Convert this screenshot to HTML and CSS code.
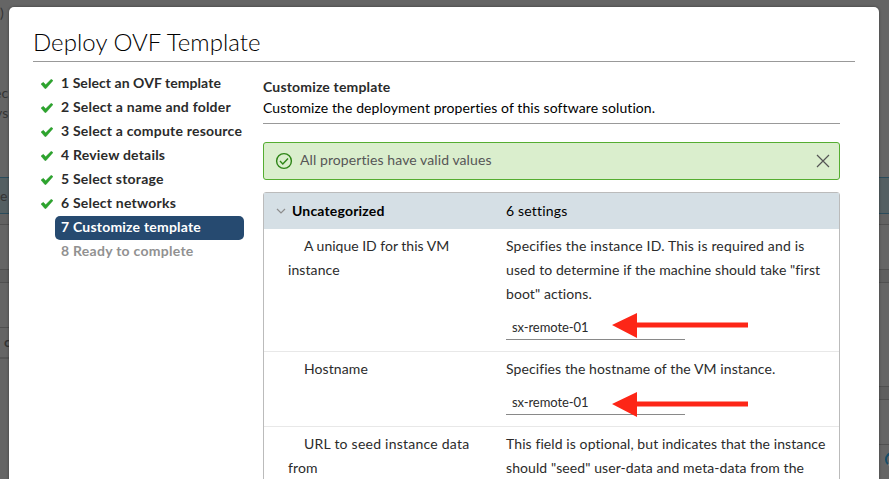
FILE: index.html
```
<!DOCTYPE html>
<html lang="en">
<head>
<meta charset="utf-8">
<title>Deploy OVF Template</title>
<link rel="stylesheet" href="styles.css">
</head>
<body>
<div class="page">
  <div class="gutter left">
    <div class="g-head"><span class="paren">)</span><span class="ec">ec</span><span class="ys">ys</span></div>
    <div class="g-teal">e</div>
    <div class="g-gap"></div>
    <div class="g-card h45"></div>
    <div class="g-gap12"></div>
    <div class="g-card h45"></div>
    <div class="g-label">c</div>
  </div>
  <main class="modal">
    <h1>Deploy OVF Template</h1>
    <div class="body">
      <ol class="steps">
        <li><svg class="tick" viewBox="0 0 12 10"><path d="M0 5 2.3 3.3 4.7 5.7 10.2.3 12 1.6 5 9.5 3.9 9.5Z"/></svg><span class="s1">1 Select an OVF template</span></li>
        <li><svg class="tick" viewBox="0 0 12 10"><path d="M0 5 2.3 3.3 4.7 5.7 10.2.3 12 1.6 5 9.5 3.9 9.5Z"/></svg><span>2 Select a name and folder</span></li>
        <li><svg class="tick" viewBox="0 0 12 10"><path d="M0 5 2.3 3.3 4.7 5.7 10.2.3 12 1.6 5 9.5 3.9 9.5Z"/></svg><span>3 Select a compute resource</span></li>
        <li><svg class="tick" viewBox="0 0 12 10"><path d="M0 5 2.3 3.3 4.7 5.7 10.2.3 12 1.6 5 9.5 3.9 9.5Z"/></svg><span>4 Review details</span></li>
        <li><svg class="tick" viewBox="0 0 12 10"><path d="M0 5 2.3 3.3 4.7 5.7 10.2.3 12 1.6 5 9.5 3.9 9.5Z"/></svg><span>5 Select storage</span></li>
        <li><svg class="tick" viewBox="0 0 12 10"><path d="M0 5 2.3 3.3 4.7 5.7 10.2.3 12 1.6 5 9.5 3.9 9.5Z"/></svg><span>6 Select networks</span></li>
        <li class="active"><span>7 Customize template</span></li>
        <li class="pending"><span>8 Ready to complete</span></li>
      </ol>
      <section class="content">
        <h2>Customize template</h2>
        <p class="lead">Customize the deployment properties of this software solution.</p>
        <div class="alert">
          <svg class="ok" viewBox="0 0 18 18"><circle cx="9" cy="9" r="7.4"/><path d="m5 9.1 2.8 2.8L13 6.4"/></svg>
          <span>All properties have valid values</span>
          <svg class="close" viewBox="0 0 14 14"><path d="m1 1 12 12M13 1 1 13"/></svg>
        </div>
        <div class="table">
          <div class="thead">
            <div class="name"><svg class="caret" viewBox="0 0 10 6"><path d="m1 1 4 4 4-4"/></svg><span>Uncategorized</span></div>
            <div>6 settings</div>
          </div>
          <div class="row first">
            <div class="prop"><span class="tight">A unique ID for this VM</span><br>instance</div>
            <div class="desc"><span class="loose">Specifies the instance ID. This is required and is</span><br>used to determine if the machine should take "first<br>boot" actions.
              <div class="field">sx-remote-01<svg class="arrow" viewBox="0 0 136 26"><path d="M0 13 25 1v9.5h111v5H25V26Z"/></svg></div>
            </div>
          </div>
          <div class="row second">
            <div class="prop">Hostname</div>
            <div class="desc">Specifies the hostname of the VM instance.
              <div class="field">sx-remote-01<svg class="arrow low" viewBox="0 0 136 26"><path d="M0 13 25 1v9.5h111v5H25V26Z"/></svg></div>
            </div>
          </div>
          <div class="row">
            <div class="prop"><span class="wide">URL to seed instance data</span><br>from</div>
            <div class="desc">This field is optional, but indicates that the instance<br>should "seed" user-data and meta-data from the</div>
          </div>
        </div>
      </section>
    </div>
  </main>
  <div class="gutter right">
    <div class="g-head"></div>
    <div class="g-teal"></div>
    <div class="g-gap"></div>
    <div class="g-card h45"></div>
    <div class="g-gap12"></div>
    <div class="g-card h104"></div>
    <div class="g-gap12"></div>
    <div class="g-card h45"></div>
    <div class="spinner"></div>
  </div>
</div>
</body>
</html>
```
FILE: styles.css
```
* { box-sizing: border-box; }
body { margin: 0; font: 14px/24px Lato, "Open Sans", sans-serif; letter-spacing: .09px; color: #2b2b2b; }
.page { display: grid; grid-template-columns: 9px 870px 10px; height: 479px; overflow: hidden; background: #656565; }
.gutter { display: flex; flex-direction: column; overflow: hidden; color: #343434; }
.g-head { height: 177px; flex: none; display: flex; flex-direction: column; }
.paren { margin-top: 1px; height: 24px; }
.ec { margin: 56px 0 0 -6px; height: 20px; }
.ys { margin-left: -5px; }
.g-teal { height: 37px; flex: none; line-height: 36px; background: #545f62; border: solid #2a4c5c; border-width: 1px 0; }
.g-gap { height: 10px; flex: none; background: #626262; }
.g-card { flex: none; border: solid #505050; border-width: 1px 0; }
.h45 { height: 46px; }
.h104 { height: 105px; }
.g-gap12 { height: 12px; flex: none; background: #5f5f5f; }
.g-label { height: 31px; flex: none; font-weight: 700; line-height: 28px; padding-left: 4px; border-bottom: 2px solid #565656; }
.spinner { width: 15px; height: 15px; flex: none; margin: 7px 0 0 6px; border: 2px solid #777; border-top-color: #174d69; border-left-color: #174d69; border-bottom-color: #777; border-radius: 50%; }

.modal { margin-top: 7px; height: 490px; padding: 0 24px; background: #fff; border-radius: 5px; box-shadow: 0 0 3px rgba(0,0,0,.4); z-index: 1; }
h1 { margin: 0; height: 55px; padding-top: 20px; font-size: 24px; line-height: 30px; font-weight: 300; letter-spacing: .04px; color: #000; border-bottom: 1px solid #999; }
.body { display: flex; gap: 19px; }
.steps { list-style: none; margin: 0; padding: 10px 0 0; width: 211px; font-weight: 700; letter-spacing: .21px; }
.steps li { display: flex; align-items: center; height: 24px; padding-left: 8px; white-space: nowrap; }
.steps span { margin-top: -2px; }
.steps .s1 { letter-spacing: .06px; }
.tick { width: 12px; height: 10px; margin-right: 8px; fill: #2ca52c; stroke: #16851b; stroke-width: .4; }
.steps .active { margin-left: 22px; padding-left: 6px; border-radius: 5px; background: #264a70; color: #fff; }
.steps .pending { padding-left: 28px; color: #919191; letter-spacing: .27px; }
.content { width: 577px; padding-top: 13px; }
h2 { margin: 0; font-size: 14px; line-height: 24px; font-weight: 700; letter-spacing: .17px; }
.lead { margin: 0; height: 25px; line-height: 18px; color: #000; border-bottom: 1px solid #999; }
.alert { display: flex; align-items: center; height: 38px; margin: 18px 0 12px; padding: 0 9px 0 11px; color: #565656; background: #daeecd; border: 1px solid #55ad31; border-radius: 3px; }
.alert span { margin-top: -2px; }
.alert svg { fill: none; }
.ok { width: 18px; height: 18px; margin-right: 7px; stroke: #2d8416; stroke-width: 1.4; }
.close { width: 14px; height: 14px; margin-left: auto; stroke: #555; stroke-width: 1.2; }
.table { border: 1px solid #bbb; border-radius: 3px; height: 320px; white-space: nowrap; }
.thead, .row { display: grid; grid-template-columns: 242px 1fr; }
.thead { height: 36px; padding-bottom: 1px; align-items: center; background: #d5dfe5; color: #000; letter-spacing: .18px; }
.name { display: flex; align-items: center; font-weight: 700; }
.caret { width: 10px; height: 6px; margin: 0 6px 0 12px; fill: none; stroke: #8d8d8d; stroke-width: 1.2; }
.row { padding-top: 5px; border-bottom: 1px solid #e8e8e8; }
.first { height: 123px; }
.second { height: 75px; }
.prop { padding-left: 24px; text-indent: 16px; }
.tight { letter-spacing: 0; }
.loose { letter-spacing: .18px; }
.wide { letter-spacing: .24px; }
.field { position: relative; width: 179px; height: 21px; margin-top: 13px; padding-left: 6px; font-size: 13px; line-height: 17px; letter-spacing: -.08px; border-bottom: 1px solid #898989; }
.arrow { position: absolute; left: 106px; top: -7px; width: 136px; height: 26px; fill: #fd2617; }
.low { top: -3px; }
```
